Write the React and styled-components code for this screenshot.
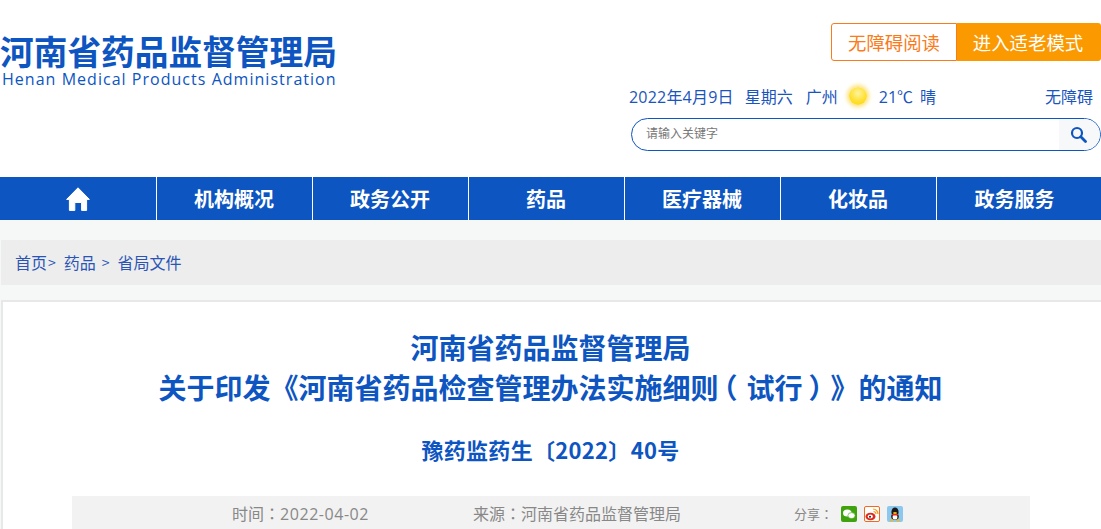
import React from 'react';
import styled, { createGlobalStyle } from 'styled-components';

const Global = createGlobalStyle`
  html, body { margin: 0; padding: 0; background: #f6f8f7; }
  body { font-family: "Noto Sans CJK SC", "Liberation Sans", sans-serif; overflow: hidden; }
  * { box-sizing: border-box; }
`;
const Page = styled.div`width: 1101px; height: 529px; overflow: hidden;`;
const Header = styled.header`height: 177px; background: #fff; display: flex; justify-content: space-between;`;
const Logo = styled.div`padding-top: 32px; color: #0d55c1; width: 340px;`;
const LogoCn = styled.div`font-size: 33.7px; font-weight: 700; line-height: 38px; white-space: nowrap; color: #0d55c1;`;
const LogoEn = styled.div`font-family: "Open Sans", sans-serif; font-size: 16px; line-height: 18px; letter-spacing: 1.03px; padding-left: 2px; white-space: nowrap;`;
const Side = styled.div`width: 470px; padding-top: 23px; display: flex; flex-direction: column;`;
const Modes = styled.div`display: flex; justify-content: flex-end; height: 38px;`;
const ModeA = styled.div`width: 126px; border: 1px solid #fb7a19; border-radius: 3px 0 0 3px; color: #fb7a19; font-size: 18.4px; display: flex; align-items: center; justify-content: center; background: #fff;`;
const ModeB = styled.div`width: 144px; background: #fb9900; color: #fff; font-size: 18.4px; border-radius: 0 3px 3px 0; display: flex; align-items: center; justify-content: center; padding-right: 2px;`;
const Info = styled.div`margin-top: 22px; height: 26px; display: flex; align-items: center; color: #1a55bd; font-family: "Open Sans", "Noto Sans CJK SC", sans-serif; font-size: 16px; white-space: nowrap; margin-left: -2px; margin-right: 8px;`;
const InfoItem = styled.span`margin-right: ${p => p.$gap}px; letter-spacing: ${p => p.$ls || 0}px;`;
const Accessible = styled.span`margin-left: auto;`;
const Sun = styled.span`width: 18px; height: 18px; border-radius: 50%; margin-right: 12px; background: radial-gradient(circle at 50% 35%, #fff3a0 0%, #ffe030 55%, #fbd30e 100%); box-shadow: 0 0 4px 2px #fde27c;`;
const Search = styled.div`margin-top: 9px; height: 33px; border: 1px solid #0d55c1; border-radius: 17px; display: flex; overflow: hidden; background: #fff;`;
const Placeholder = styled.div`flex: 1; padding-left: 14px; font-size: 12px; line-height: 28px; color: #777;`;
const SearchBtn = styled.div`width: 41px; background: #f6f8f9; display: flex; align-items: center; justify-content: center; padding-right: 3px;`;
const Nav = styled.nav`height: 43px; background: #0d55c1; display: flex;`;
const NavItem = styled.div`width: ${p => p.$first ? 157 : 156}px; ${p => !p.$last && 'border-right: 1px solid #fff;'} color: #fff; font-size: 20px; font-weight: 700; display: flex; align-items: center; justify-content: center; padding-right: ${p => p.$first ? 0 : 1}px;`;
const Crumbs = styled.div`margin: 20px 0 0 1px; height: 45px; background: #ededed; display: flex; align-items: center; padding: 0 0 2px 14px; font-size: 16px; color: #2a55b5; white-space: nowrap;`;
const Sep = styled.span`margin: 0 ${p => p.$r}px 0 ${p => p.$l}px; font-size: 14px;`;
const Card = styled.main`margin: 15px 0 0 1px; height: 300px; background: #fff; border: 2px solid #e8e8e8; border-right: none; border-bottom: none; padding-top: 25px; text-align: center;`;
const Title = styled.h1`margin: 0; font-size: 28px; line-height: 40px; font-weight: 700; color: #0d55c1; padding-right: 3px; text-spacing-trim: space-all;`;
const ParenL = styled.span`font-feature-settings: "halt"; margin: 0 9px 0 5px;`;
const ParenR = styled.span`font-feature-settings: "halt"; margin: 0 8px 0 6px;`;
const Doc = styled.h2`margin: 24px 0 0; font-size: 22px; line-height: 36px; font-weight: 700; color: #0d55c1; padding-right: 3px; letter-spacing: 0.3px;`;
const Meta = styled.div`margin: 29px 0 0 69px; width: 958px; height: 60px; background: #f2f2f2; display: flex; font-size: 16px; color: #888; text-align: left; padding-top: 5px; line-height: 24px; white-space: nowrap;`;
const Date = styled.span`margin-left: 160px; width: 241px;`;
const Colon = styled.span`font-family: "Noto Sans CJK TC", sans-serif;`;
const Digits = styled.span`font-family: "Open Sans", sans-serif; letter-spacing: 0.55px;`;
const Source = styled.span`width: 321px;`;
const Share = styled.span`font-size: 13px; display: flex; align-items: center; height: 24px; margin-top: 1px;`;
const ShareIcon = styled.svg`width: 16px; height: 16px; margin-left: ${p => p.$ml}px; flex: none;`;

const HomeIcon = () => (
  <svg width="24" height="24" viewBox="0 0 24 24"><path fill="#fff" stroke="#fff" strokeWidth="1" strokeLinejoin="round" d="M12 .8 L23.4 12.4 L20.6 12.4 L20.6 23.4 L15.6 23.4 L15.6 15.5 L8.8 15.5 L8.8 23.4 L3.4 23.4 L3.4 12.4 L.6 12.4 Z"/></svg>
);
const SearchIcon = () => (
  <svg width="17" height="17" viewBox="0 0 17 17" fill="none" stroke="#0d55c1" strokeWidth="2.2"><circle cx="7" cy="7" r="5"/><path d="M10.8 10.8 L15.5 15.5" strokeWidth="2.8" strokeLinecap="round"/></svg>
);

export default function App() {
  return (
    <Page>
      <Global />
      <Header>
        <Logo>
          <LogoCn>河南省药品监督管理局</LogoCn>
          <LogoEn>Henan Medical Products Administration</LogoEn>
        </Logo>
        <Side>
          <Modes>
            <ModeA>无障碍阅读</ModeA>
            <ModeB>进入适老模式</ModeB>
          </Modes>
          <Info>
            <InfoItem $gap={11} $ls={0.2}>2022年4月9日</InfoItem>
            <InfoItem $gap={13}>星期六</InfoItem>
            <InfoItem $gap={11}>广州</InfoItem>
            <Sun />
            <InfoItem $gap={7}>21℃</InfoItem>
            <span>晴</span>
            <Accessible>无障碍</Accessible>
          </Info>
          <Search>
            <Placeholder>请输入关键字</Placeholder>
            <SearchBtn><SearchIcon /></SearchBtn>
          </Search>
        </Side>
      </Header>
      <Nav>
        <NavItem $first><HomeIcon /></NavItem>
        <NavItem>机构概况</NavItem>
        <NavItem>政务公开</NavItem>
        <NavItem>药品</NavItem>
        <NavItem>医疗器械</NavItem>
        <NavItem>化妆品</NavItem>
        <NavItem $last>政务服务</NavItem>
      </Nav>
      <Crumbs>
        首页<Sep $l={1} $r={8}>&gt;</Sep>药品<Sep $l={6} $r={8}>&gt;</Sep>省局文件
      </Crumbs>
      <Card>
        <Title>河南省药品监督管理局<br />关于印发《河南省药品检查管理办法实施细则<ParenL>（</ParenL>试行<ParenR>）</ParenR>》的通知</Title>
        <Doc>豫药监药生〔2022〕40号</Doc>
        <Meta>
          <Date>时间<Colon>：</Colon><Digits>2022-04-02</Digits></Date>
          <Source>来源<Colon>：</Colon>河南省药品监督管理局</Source>
          <Share>
            分享<Colon>：</Colon>
            <ShareIcon $ml={8} viewBox="0 0 16 16"><rect width="16" height="16" rx="2" fill="#3fa30d"/><ellipse cx="6.3" cy="7" rx="4.3" ry="3.6" fill="#fff"/><ellipse cx="10.5" cy="9.6" rx="3.6" ry="3" fill="#fff" stroke="#3fa30d" strokeWidth=".6"/></ShareIcon>
            <ShareIcon $ml={7} viewBox="0 0 16 16"><rect x=".5" y=".5" width="15" height="15" rx="1.5" fill="#fff" stroke="#ef6a1c"/><ellipse cx="6.5" cy="10.5" rx="5" ry="3.8" fill="#dc2a20"/><ellipse cx="6.3" cy="10.6" rx="2.6" ry="2" fill="#fff"/><circle cx="6" cy="10.8" r="1" fill="#222"/><path d="M9 3 A5 5 0 0 1 14 8 M9.5 5.5 A2.5 2.5 0 0 1 12 8" fill="none" stroke="#f29a1c" strokeWidth="1.2"/></ShareIcon>
            <ShareIcon $ml={7} viewBox="0 0 16 16"><rect width="16" height="16" rx="2" fill="#8cc8ee"/><ellipse cx="8" cy="6" rx="3.6" ry="4.6" fill="#1a1a1a"/><ellipse cx="8" cy="10.5" rx="3.8" ry="3.6" fill="#1a1a1a"/><ellipse cx="8" cy="11" rx="2.4" ry="2.6" fill="#fff"/><path d="M5 8 H11 L10.6 9.4 H5.4 Z" fill="#e8261c"/><ellipse cx="8" cy="7" rx="2" ry=".9" fill="#f7b90f"/><ellipse cx="4.8" cy="14.3" rx="2" ry="1" fill="#f7b90f"/><ellipse cx="11.2" cy="14.3" rx="2" ry="1" fill="#f7b90f"/></ShareIcon>
          </Share>
        </Meta>
      </Card>
    </Page>
  );
}
